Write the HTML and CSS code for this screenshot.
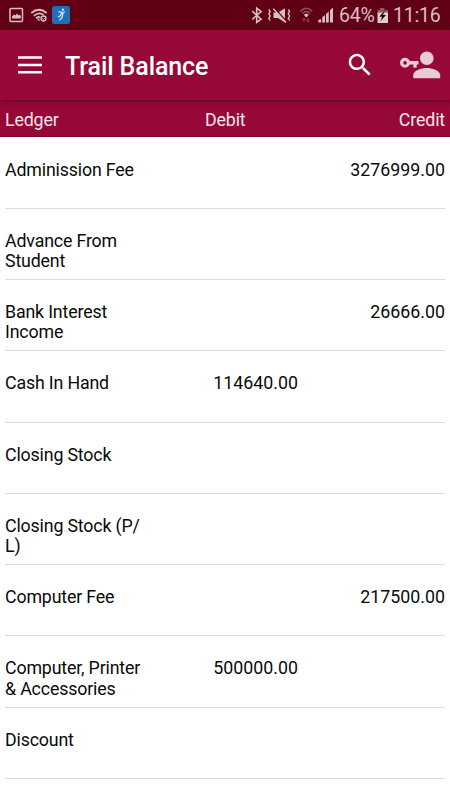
FILE: index.html
```html
<!DOCTYPE html>
<html lang="en">
<head>
  <meta charset="UTF-8">
  <meta name="viewport" content="width=device-width, initial-scale=1.0">
  <title>Trail Balance</title>
  <link rel="stylesheet" href="styles.css">
</head>
<body>
  <div class="statusbar">
    <svg class="status-left" width="80" height="30" viewBox="0 0 80 30">
      <rect x="10" y="8.5" width="12.5" height="13" rx="1" fill="none" stroke="#d9bfc4" stroke-width="1.5"/>
      <path d="M12 18.5v-2l2-2 1.5 1 1.5-2 1.5 2 1-1 1.3 1.5v2.5z" fill="#d9bfc4"/>
      <g fill="none" stroke="#d9bfc4" stroke-width="1.7">
        <path d="M31.3 13q7.7-6.5 15.4 0M33.8 15.8q5-4.2 9.7-1"/>
        <path d="M36 18.2q2-2 4-1"/>
      </g>
      <path d="M36.5 18.5h3v3z" fill="#d9bfc4"/>
      <circle cx="43.5" cy="18.5" r="2.5" fill="none" stroke="#d9bfc4" stroke-width="1.3"/>
      <path d="M42 18.3l1.2 1.2 2-2" fill="none" stroke="#d9bfc4"/>
      <rect x="52" y="6" width="18" height="18" rx="2.5" fill="#1e6fb5"/>
      <circle cx="63" cy="9.8" r="1.2" fill="#d5dfea"/>
      <path d="M58.3 11.6l3.4.6-1.2 3.3-2.5 1.4M61.7 12.2l1 2.6-.6 2.6-2.6 3M62.7 13.4l2-1.6" fill="none" stroke="#d5dfea" stroke-width="1.3"/>
    </svg>
    <svg class="status-right" width="84" height="30" viewBox="251 0 84 30">
      <path d="M252.3 11.2l8.8 8-4.4 3.3V8.2l4.4 3.3-8.8 7.8" fill="none" stroke="#d9bfc4" stroke-width="1.6"/>
      <path d="M273.5 12.5h4.5l7-4.3v14.3l-7-4.5h-4.5z" fill="#d9bfc4"/>
      <path d="M274.5 8.2l12 13.3" stroke="#610014" stroke-width="1.6"/>
      <path d="M273.3 8.8l12.7 13.7" stroke="#d9bfc4" stroke-width="1.4"/>
      <path d="M268.8 9.5l1.3 2-1.3 2.3 1.3 2.2-1.3 2.3 1.3 2.2M288.3 9.5l1.3 2-1.3 2.3 1.3 2.2-1.3 2.3 1.3 2.2" fill="none" stroke="#d9bfc4" stroke-width="1.4"/>
      <path d="M300.3 11.5q6-6.5 12 0M302.4 13.5q3.9-4 7.8 0" fill="none" stroke="#8f515d" stroke-width="1.5"/>
      <path d="M303.8 14.8q2.5-2.3 5 0l-2.5 2.7z" fill="#d9bfc4"/>
      <path d="M304 22v-3.5M302.5 20l1.5-1.7 1.5 1.7M308 18.3v3.5M306.6 20.2l1.4 1.7 1.5-1.7" fill="none" stroke="#8f515d"/>
      <path d="M318.3 22.5v-2.4l2.8-1.1v3.5zM322.2 22.5v-5.3l2.8-2.2v7.5zM326 22.5V14l2.8-2.5v11zM330 22.5V10.3l3-2.8v15z" fill="#d9bfc4"/>
    </svg>
    <span class="battery-level">64%</span>
    <svg class="battery" width="12" height="30" viewBox="377 0 12 30">
      <path d="M377.5 10h2.3V8h4.5v2h3.7v3.5h-10.5z" fill="#935460"/>
      <path d="M377.5 12.5h10.5V23h-10.5z" fill="#e0cacf"/>
      <path d="M384.8 10.5l-5.5 6.3h2.8l-1.7 4.4 5.6-6.2h-3z" fill="#17070b"/>
    </svg>
    <span class="clock">11:16</span>
  </div>

  <div class="appbar">
    <svg class="menu-icon" width="24" height="18" viewBox="0 0 24 18">
      <path d="M0 1.4h24M0 9h24M0 16.3h24" stroke="#fff" stroke-width="2.5"/>
    </svg>
    <h1>Trail Balance</h1>
    <svg class="search-icon" width="30" height="30" viewBox="0 0 24 24">
      <path fill="#fff" d="M15.5 14h-.79l-.28-.27C15.41 12.59 16 11.11 16 9.5 16 5.91 13.09 3 9.5 3S3 5.91 3 9.5 5.91 16 9.5 16c1.61 0 3.09-.59 4.23-1.57l.27.28v.79l5 4.99L20.49 19l-4.99-5zm-6 0C7.01 14 5 11.99 5 9.5S7.01 5 9.5 5 14 7.01 14 9.5 11.99 14 9.5 14z"/>
    </svg>
    <svg class="user-icon" width="41" height="29" viewBox="0 0 41 29">
      <g fill="#ebcad8">
        <circle cx="26.8" cy="7.2" r="6.8"/>
        <path d="M13.2 27.2v-3.3c0-4.6 8.6-7 13.5-7s13.5 2.4 13.5 7v3.3z"/>
        <path d="M9 10h9.5v3.5h-1.8v3.2h-3.3v-3.2H9z"/>
      </g>
      <circle cx="5" cy="11.8" r="3.4" fill="none" stroke="#ebcad8" stroke-width="3.1"/>
    </svg>
  </div>

  <div class="list-head">
    <span class="ledger">Ledger</span>
    <span class="debit">Debit</span>
    <span class="credit">Credit</span>
  </div>

  <div class="list">
    <div class="row">
      <span class="ledger">Adminission Fee</span>
      <span class="debit"></span>
      <span class="credit">3276999.00</span>
    </div>
    <div class="row">
      <span class="ledger">Advance From Student</span>
      <span class="debit"></span>
      <span class="credit"></span>
    </div>
    <div class="row">
      <span class="ledger">Bank Interest Income</span>
      <span class="debit"></span>
      <span class="credit">26666.00</span>
    </div>
    <div class="row">
      <span class="ledger">Cash In Hand</span>
      <span class="debit">114640.00</span>
      <span class="credit"></span>
    </div>
    <div class="row">
      <span class="ledger">Closing Stock</span>
      <span class="debit"></span>
      <span class="credit"></span>
    </div>
    <div class="row">
      <span class="ledger">Closing Stock (P/<br>L)</span>
      <span class="debit"></span>
      <span class="credit"></span>
    </div>
    <div class="row">
      <span class="ledger">Computer Fee</span>
      <span class="debit"></span>
      <span class="credit">217500.00</span>
    </div>
    <div class="row">
      <span class="ledger">Computer, Printer &amp; Accessories</span>
      <span class="debit">500000.00</span>
      <span class="credit"></span>
    </div>
    <div class="row">
      <span class="ledger">Discount</span>
      <span class="debit"></span>
      <span class="credit"></span>
    </div>
  </div>
</body>
</html>
```
FILE: styles.css
```css
* { box-sizing: border-box; }

body {
  margin: 0;
  height: 800px;
  overflow: hidden;
  background: #fff;
  color: #0a0a0a;
  font-family: Roboto, sans-serif;
  font-size: 17.8px;
  line-height: 20.4px;
}

svg {
  display: block;
  flex: none;
}

.statusbar {
  display: flex;
  align-items: center;
  height: 30px;
  padding-right: 10px;
  background: #610014;
  color: #d9bfc4;
  font-size: 19.5px;
  letter-spacing: -0.2px;
}

.status-right { margin-left: auto; }

.battery-level {
  width: 38px;
  margin-left: 4px;
  margin-top: 3px;
}

.clock {
  width: 47px;
  margin-left: 4px;
  margin-top: 3px;
  text-align: right;
}

.appbar {
  position: relative;
  display: flex;
  align-items: center;
  height: 70px;
  padding: 0 9px 0 18px;
  background: #960837;
  box-shadow: 0 1px 5px rgba(40, 0, 15, 0.6);
}

h1 {
  flex: 1;
  margin: 4px 0 0 23px;
  color: #fff;
  font-size: 25px;
  font-weight: 500;
  line-height: 30px;
  letter-spacing: -0.1px;
}

.search-icon { margin-right: 25px; }

.list-head {
  display: flex;
  align-items: center;
  height: 37px;
  padding: 4px 5px 0;
  background: #960837;
  color: #f8e6ec;
  border-bottom: 1px solid #85001f;
  letter-spacing: -0.14px;
}

.list-head .ledger { width: 200px; }

.list-head .debit {
  width: 93px;
  text-align: left;
}

.list { padding: 0.5px 5px 0; }

.row {
  display: flex;
  height: 71.25px;
  padding-top: 22px;
  border-bottom: 1px solid #dadada;
}

.ledger {
  width: 145px;
  letter-spacing: -0.16px;
}

.debit {
  width: 148px;
  text-align: right;
}

.credit {
  flex: 1;
  text-align: right;
}
```
